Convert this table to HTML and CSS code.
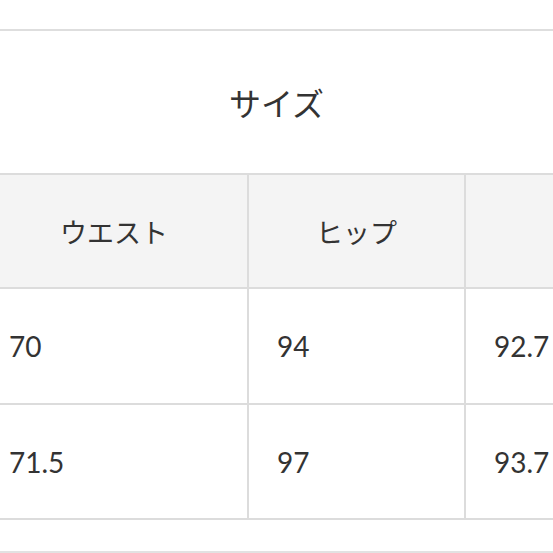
FILE: index.html
```html
<!DOCTYPE html>
<html lang="ja">
<head>
<meta charset="utf-8">
<link rel="stylesheet" href="styles.css">
</head>
<body>
<div class="page">
  <div class="title">サイズ</div>
  <div class="scroller">
    <table class="size-table">
      <colgroup>
        <col class="c1"><col class="c2"><col class="c3">
      </colgroup>
      <thead>
        <tr><th>ウエスト</th><th>ヒップ</th><th></th></tr>
      </thead>
      <tbody>
        <tr><td>70</td><td>94</td><td>92.7</td></tr>
        <tr><td>71.5</td><td>97</td><td>93.7</td></tr>
      </tbody>
    </table>
  </div>
  <div class="footer"></div>
</div>
</body>
</html>
```
FILE: styles.css
```css
html, body {
  margin: 0;
  padding: 0;
  background: #fff;
}
body {
  font-family: Lato, "Noto Sans CJK JP", sans-serif;
  color: #333;
  width: 553px;
  height: 553px;
  overflow: hidden;
}
.page {
  padding-top: 29px;
}
.title {
  border-top: 2px solid #dedede;
  height: 142px;
  display: flex;
  align-items: center;
  justify-content: center;
  font-size: 32px;
  color: #333;
}
.scroller {
  overflow: hidden;
  width: 553px;
}
.size-table {
  margin-left: -21px;
  border-collapse: separate;
  border-spacing: 0;
  table-layout: fixed;
  width: 900px;
}
.c1 { width: 268px; }
.c2 { width: 217px; }
.c3 { width: 415px; }
.size-table th,
.size-table td {
  box-sizing: border-box;
  border-left: 2px solid #dcdcdc;
  border-bottom: 2px solid #dcdcdc;
  padding: 0;
}
.size-table th {
  border-top: 2px solid #dcdcdc;
  background: #f4f4f4;
  height: 116px;
  font-weight: normal;
  font-size: 27px;
  text-align: center;
  color: #333;
}
.size-table td {
  height: 116px;
  font-size: 28px;
  text-align: left;
  padding-left: 28px;
  color: #333;
}
.size-table tbody tr:last-child td {
  height: 115px;
}
.footer {
  margin-top: 31px;
  border-top: 2px solid #e2e2e2;
}
```
